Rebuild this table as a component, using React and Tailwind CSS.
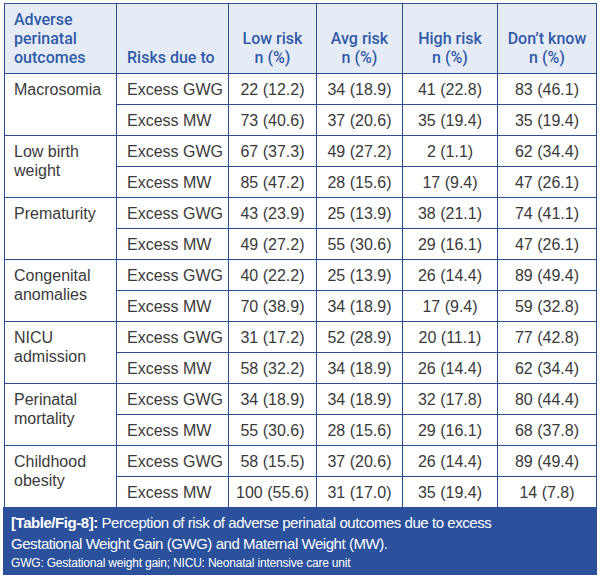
import React from 'react';

const rows = [
  {
    outcome: ['Macrosomia'],
    data: [
      ['Excess GWG', '22 (12.2)', '34 (18.9)', '41 (22.8)', '83 (46.1)'],
      ['Excess MW', '73 (40.6)', '37 (20.6)', '35 (19.4)', '35 (19.4)'],
    ],
  },
  {
    outcome: ['Low birth', 'weight'],
    data: [
      ['Excess GWG', '67 (37.3)', '49 (27.2)', '2 (1.1)', '62 (34.4)'],
      ['Excess MW', '85 (47.2)', '28 (15.6)', '17 (9.4)', '47 (26.1)'],
    ],
  },
  {
    outcome: ['Prematurity'],
    data: [
      ['Excess GWG', '43 (23.9)', '25 (13.9)', '38 (21.1)', '74 (41.1)'],
      ['Excess MW', '49 (27.2)', '55 (30.6)', '29 (16.1)', '47 (26.1)'],
    ],
  },
  {
    outcome: ['Congenital', 'anomalies'],
    data: [
      ['Excess GWG', '40 (22.2)', '25 (13.9)', '26 (14.4)', '89 (49.4)'],
      ['Excess MW', '70 (38.9)', '34 (18.9)', '17 (9.4)', '59 (32.8)'],
    ],
  },
  {
    outcome: ['NICU', 'admission'],
    data: [
      ['Excess GWG', '31 (17.2)', '52 (28.9)', '20 (11.1)', '77 (42.8)'],
      ['Excess MW', '58 (32.2)', '34 (18.9)', '26 (14.4)', '62 (34.4)'],
    ],
  },
  {
    outcome: ['Perinatal', 'mortality'],
    data: [
      ['Excess GWG', '34 (18.9)', '34 (18.9)', '32 (17.8)', '80 (44.4)'],
      ['Excess MW', '55 (30.6)', '28 (15.6)', '29 (16.1)', '68 (37.8)'],
    ],
  },
  {
    outcome: ['Childhood', 'obesity'],
    data: [
      ['Excess GWG', '58 (15.5)', '37 (20.6)', '26 (14.4)', '89 (49.4)'],
      ['Excess MW', '100 (55.6)', '31 (17.0)', '35 (19.4)', '14 (7.8)'],
    ],
  },
];

const line = 'border border-[#2d4f8e]';

export default function App() {
  return (
    <div className="w-[601px] h-[579px] bg-white pt-[3px] pl-[4px] font-['Liberation_Sans',Arial,sans-serif] text-[16px]">
      <table className="table-fixed border-collapse w-[593px]">
        <colgroup>
          <col className="w-[112px]" />
          <col className="w-[112px]" />
          <col className="w-[88px]" />
          <col className="w-[86px]" />
          <col className="w-[95px]" />
          <col className="w-[99px]" />
        </colgroup>
        <thead>
          <tr className="h-[70px] bg-[#e6ecf6] text-[#2f5ba8] leading-[19px] font-['Roboto',Arial,sans-serif]">
            <th className={`${line} text-left align-bottom font-medium pl-[9px] pr-0 pb-[6px]`}>
              Adverse<br />perinatal<br />outcomes
            </th>
            <th className={`${line} text-left align-bottom font-medium pl-[10px] pr-0 pb-[6px] whitespace-nowrap`}>Risks due to</th>
            <th className={`${line} text-center align-bottom font-medium pb-[6px] whitespace-nowrap`}>Low risk<br />n (%)</th>
            <th className={`${line} text-center align-bottom font-medium pb-[6px] whitespace-nowrap`}>Avg risk<br />n (%)</th>
            <th className={`${line} text-center align-bottom font-medium pb-[6px] whitespace-nowrap`}>High risk<br />n (%)</th>
            <th className={`${line} text-center align-bottom font-medium pb-[6px] whitespace-nowrap`}>Don’t know<br />n (%)</th>
          </tr>
        </thead>
        <tbody className="text-[#3a3a3a]">
          {rows.map((group) =>
            group.data.map((r, i) => (
              <tr key={group.outcome[0] + i} className="h-[31px]">
                {i === 0 && (
                  <td rowSpan={2} className={`${line} align-top pl-[9px] pr-0 pt-[6px] leading-[19px]`}>
                    {group.outcome.map((t, k) => (
                      <div key={k}>{t}</div>
                    ))}
                  </td>
                )}
                <td className={`${line} pl-[10px] pr-0 leading-[19px] whitespace-nowrap`}>{r[0]}</td>
                {r.slice(1).map((v, j) => (
                  <td key={j} className={`${line} text-center leading-[19px] whitespace-nowrap`}>{v}</td>
                ))}
              </tr>
            ))
          )}
        </tbody>
      </table>
      <div className="w-[594px] -ml-[1px] -mt-[1px] bg-[#2b519d] text-white px-[8px] pt-[5px] pb-[3px]">
        <p className="text-[15px] leading-[21px] tracking-[-0.45px]">
          <span className="font-bold">[Table/Fig-8]:</span> Perception of risk of adverse perinatal outcomes due to excess
          <br />
          Gestational Weight Gain (GWG) and Maternal Weight (MW).
        </p>
        <p className="text-[12px] leading-[18px] tracking-[-0.2px]">GWG: Gestational weight gain; NICU: Neonatal intensive care unit</p>
      </div>
    </div>
  );
}
